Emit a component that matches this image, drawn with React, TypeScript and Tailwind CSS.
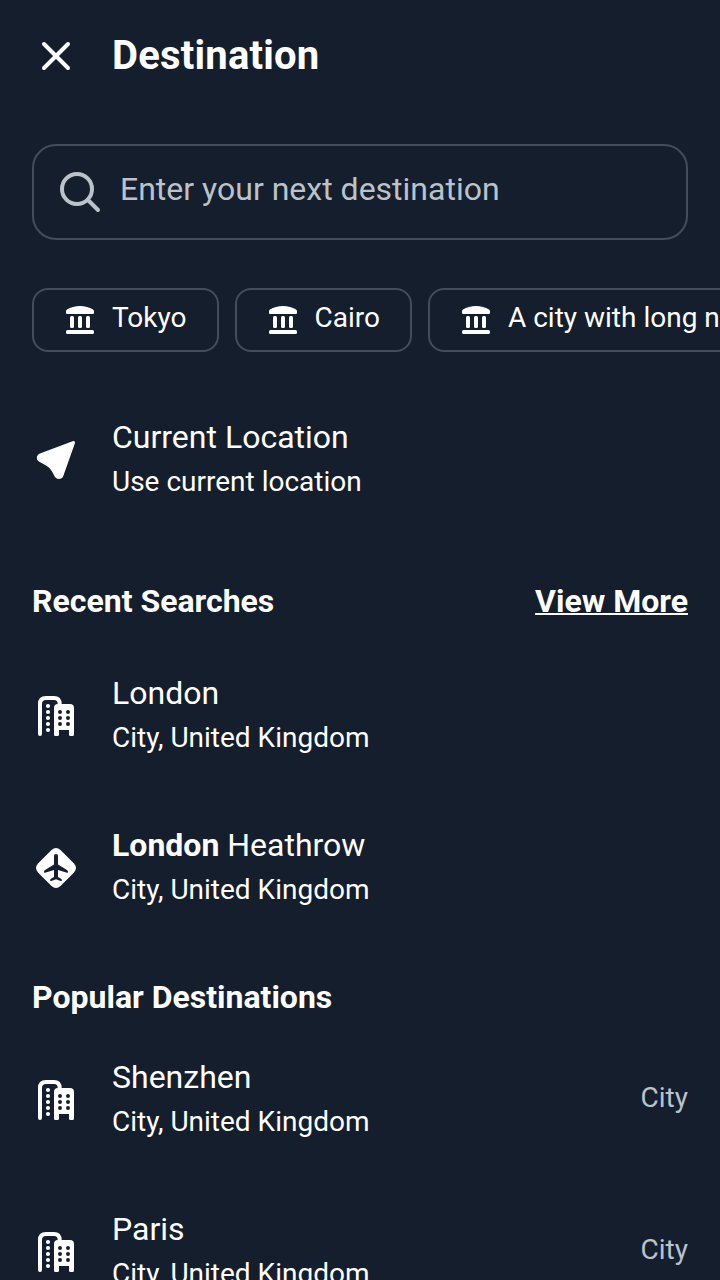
import React from "react";

function CloseIcon() {
  return (
    <svg className="size-12 shrink-0" viewBox="0 0 48 48" fill="none" stroke="currentColor" strokeWidth="4" strokeLinecap="round">
      <path d="M12 12 36 36M36 12 12 36" />
    </svg>
  );
}

function SearchIcon() {
  return (
    <svg className="size-12 shrink-0" viewBox="0 0 48 48" fill="none" stroke="currentColor" strokeWidth="4" strokeLinecap="round">
      <circle cx="21" cy="21" r="15" />
      <path d="M32 32 42 42" />
    </svg>
  );
}

function LandmarkIcon() {
  return (
    <svg className="size-8 shrink-0" viewBox="0 0 32 32" fill="currentColor">
      <path d="M3 10Q2 10 2 9V7.200Q2 6 3 5.500C10 .8 22 .8 29 5.500Q30 6 30 7.200V9Q30 10 29 10Z" />
      <rect x="6" y="12" width="4" height="12" rx="1.500" />
      <rect x="14" y="12" width="4" height="12" rx="1.500" />
      <rect x="22" y="12" width="4" height="12" rx="1.500" />
      <rect x="2" y="26" width="28" height="4" rx="1.500" />
    </svg>
  );
}

function LocationIcon() {
  return (
    <svg className="size-12 shrink-0" viewBox="0 0 48 48" fill="currentColor">
      <path d="M40.600 5.200C42.300 4.600 43.400 5.700 42.900 7.300L31.200 40.200C29.900 43.800 24.300 43.800 22.700 40.500L20.300 36C18.800 33 16.500 30.800 13.200 29L7.300 25.800C3.900 23.900 4 19 7.900 17.400Z" />
    </svg>
  );
}

function BuildingIcon() {
  return (
    <svg className="size-12 shrink-0" viewBox="0 0 48 48" fill="currentColor">
      <path d="M8 42V12Q8 6 14 6H22Q27.700 6 27.700 12V14" fill="none" stroke="currentColor" strokeWidth="4" strokeLinecap="round" />
      <circle cx="16" cy="14" r="2.100" />
      <circle cx="16" cy="20" r="2.100" />
      <circle cx="16" cy="26" r="2.100" />
      <circle cx="16" cy="32" r="2.100" />
      <circle cx="16" cy="38" r="2.100" />
      <path
        fillRule="evenodd"
        d="M26 12H38Q42 12 42 16V42.500Q42 44 40.500 44H38.500Q37 44 37 42.500V38H27V42.500Q27 44 25.500 44H23.500Q22 44 22 42.500V16Q22 12 26 12ZM26 20a2 2 0 1 0 4 0a2 2 0 1 0-4 0ZM34 20a2 2 0 1 0 4 0a2 2 0 1 0-4 0ZM26 26a2 2 0 1 0 4 0a2 2 0 1 0-4 0ZM34 26a2 2 0 1 0 4 0a2 2 0 1 0-4 0ZM26 32a2 2 0 1 0 4 0a2 2 0 1 0-4 0ZM34 32a2 2 0 1 0 4 0a2 2 0 1 0-4 0Z"
      />
    </svg>
  );
}

function AirportIcon() {
  return (
    <svg className="size-12 shrink-0" viewBox="0 0 48 48">
      <path fill="currentColor" d="M19.500 6Q24 2 28.500 6L42 19.500Q46 24 42 28.500L28.500 42Q24 46 19.500 42L6 28.500Q2 24 6 19.500Z" />
      <path
        className="fill-[#141e2c]"
        d="M24 10Q26 10 26 12V20.500L35 26Q36 26.700 36 28Q36 29 35 28.700L26 26V33L29 34.800Q30 35.500 29.800 36.700Q29.500 37.200 28.700 37L24 35.300L19.300 37Q18.500 37.200 18.200 36.700Q18 35.500 19 34.800L22 33V26L13 28.700Q12 29 12 28Q12 26.700 13 26L22 20.500V12Q22 10 24 10Z"
      />
    </svg>
  );
}

type RowProps = { icon: React.ReactNode; title: React.ReactNode; subtitle: string; tag?: string };

function Row({ icon, title, subtitle, tag }: RowProps) {
  return (
    <div className="flex h-[152px] shrink-0 items-center px-8">
      {icon}
      <div className="mb-[5px] ml-8 flex-1">
        <div className="h-[49px] text-[32px] leading-[48px]">{title}</div>
        <div className="h-10 text-[28px] leading-[40px]">{subtitle}</div>
      </div>
      {tag && <span className="mb-1 text-[28px] leading-[40px] text-[#bbc2ca]">{tag}</span>}
    </div>
  );
}

const cities = ["Tokyo", "Cairo", "A city with long name"];

export default function App() {
  return (
    <main className="flex h-[1280px] w-[720px] flex-col overflow-hidden bg-[#141e2c] font-['Roboto',sans-serif] text-white">
      <header className="flex h-28 shrink-0 items-center gap-8 px-8">
        <CloseIcon />
        <h1 className="text-[40px] leading-[56px] font-bold tracking-[0.2px]">Destination</h1>
      </header>

      <div className="mx-8 mt-8 flex h-24 shrink-0 items-center gap-4 rounded-[24px] border-2 border-[#434e5b] px-[22px] text-[#bbc2ca]">
        <SearchIcon />
        <span className="mb-1.5 text-[32px] leading-[48px]">Enter your next destination</span>
      </div>

      <div className="mt-12 flex shrink-0 gap-4 pl-8">
        {cities.map((city) => (
          <div key={city} className="flex h-16 shrink-0 items-center gap-4 rounded-[16px] border-2 border-[#434e5b] pr-[30px] pl-[30px]">
            <LandmarkIcon />
            <span className="mb-1 text-[28px] leading-[40px] whitespace-nowrap">{city}</span>
          </div>
        ))}
      </div>

      <div className="mt-8 flex shrink-0 flex-col">
        <Row icon={<LocationIcon />} title="Current Location" subtitle="Use current location" />
      </div>

      <div className="mt-[41px] flex h-12 shrink-0 items-center justify-between px-8 text-[32px] leading-[48px] font-bold">
        <h2>Recent Searches</h2>
        <a className="underline decoration-2">View More</a>
      </div>
      <div className="mt-[15px] flex shrink-0 flex-col">
        <Row icon={<BuildingIcon />} title="London" subtitle="City, United Kingdom" />
        <Row icon={<AirportIcon />} title={<><b>London</b> Heathrow</>} subtitle="City, United Kingdom" />
      </div>

      <h2 className="mt-[29px] h-12 shrink-0 px-8 text-[32px] leading-[48px] font-bold">Popular Destinations</h2>
      <div className="mt-[3px] flex shrink-0 flex-col">
        <Row icon={<BuildingIcon />} title="Shenzhen" subtitle="City, United Kingdom" tag="City" />
        <Row icon={<BuildingIcon />} title="Paris" subtitle="City, United Kingdom" tag="City" />
      </div>
    </main>
  );
}
